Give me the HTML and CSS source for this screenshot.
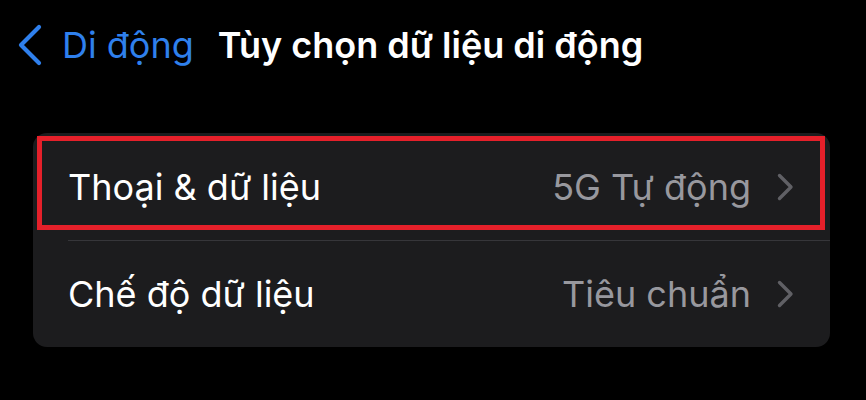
FILE: index.html
```html
<!DOCTYPE html>
<html lang="vi">
<head>
    <meta charset="UTF-8">
    <meta name="viewport" content="width=device-width, initial-scale=1.0">
    <title>Tùy chọn dữ liệu di động</title>
    <link rel="stylesheet" href="styles.css">
</head>
<body>
    <!-- Thanh điều hướng -->
    <div class="nav">
        <a class="back" href="#">
            <svg class="back-icon" width="26" height="42" viewBox="0 0 26 42">
                <path d="M22 3 L4 21 L22 39" fill="none" stroke="#2f80ed" stroke-width="4.2" stroke-linecap="round" stroke-linejoin="round"/>
            </svg>
            <span>Di động</span>
        </a>
        <div class="nav-title">Tùy chọn dữ liệu di động</div>
    </div>

    <!-- Danh sách cài đặt -->
    <div class="group">
        <div class="row">
            <div class="row-label">Thoại &amp; dữ liệu</div>
            <div class="row-value">5G Tự động</div>
            <svg class="chevron" width="17" height="28" viewBox="0 0 17 28">
                <path d="M2.5 2.5 L14 14 L2.5 25.5" fill="none" stroke="#606065" stroke-width="3.4" stroke-linecap="round" stroke-linejoin="round"/>
            </svg>
        </div>
        <div class="row">
            <div class="row-label">Chế độ dữ liệu</div>
            <div class="row-value">Tiêu chuẩn</div>
            <svg class="chevron" width="17" height="28" viewBox="0 0 17 28">
                <path d="M2.5 2.5 L14 14 L2.5 25.5" fill="none" stroke="#606065" stroke-width="3.4" stroke-linecap="round" stroke-linejoin="round"/>
            </svg>
        </div>
        <div class="highlight"></div>
    </div>
</body>
</html>
```

FILE: styles.css
```css
body {
    margin: 0;
    background-color: #000;
    font-family: Inter, "Noto Sans", sans-serif;
    color: #fff;
    width: 866px;
    height: 400px;
    overflow: hidden;
}
.nav {
    display: flex;
    align-items: center;
    height: 90px;
    padding-left: 17px;
}
.back {
    display: flex;
    align-items: center;
    gap: 19px;
    color: #2f80ed;
    text-decoration: none;
    font-size: 36px;
    margin-right: 24px;
}
.back-icon {
    display: block;
}
.nav-title {
    font-size: 36px;
    font-weight: 600;
}
.group {
    position: relative;
    margin: 43px 36px 0 33px;
    background-color: #1c1c1e;
    border-radius: 14px;
}
.row {
    display: flex;
    align-items: center;
    height: 107px;
    box-sizing: border-box;
    margin-left: 35px;
    padding-right: 36px;
    font-size: 36px;
}
.row + .row {
    border-top: 1px solid #36363a;
}
.row-label {
    flex: 1;
}
.row-value {
    color: #98989e;
    margin-right: 26px;
}
.chevron {
    display: block;
}
.highlight {
    position: absolute;
    left: 4px;
    top: 3px;
    width: 788px;
    height: 94px;
    border: 5px solid #e5202a;
    box-sizing: border-box;
}
```
